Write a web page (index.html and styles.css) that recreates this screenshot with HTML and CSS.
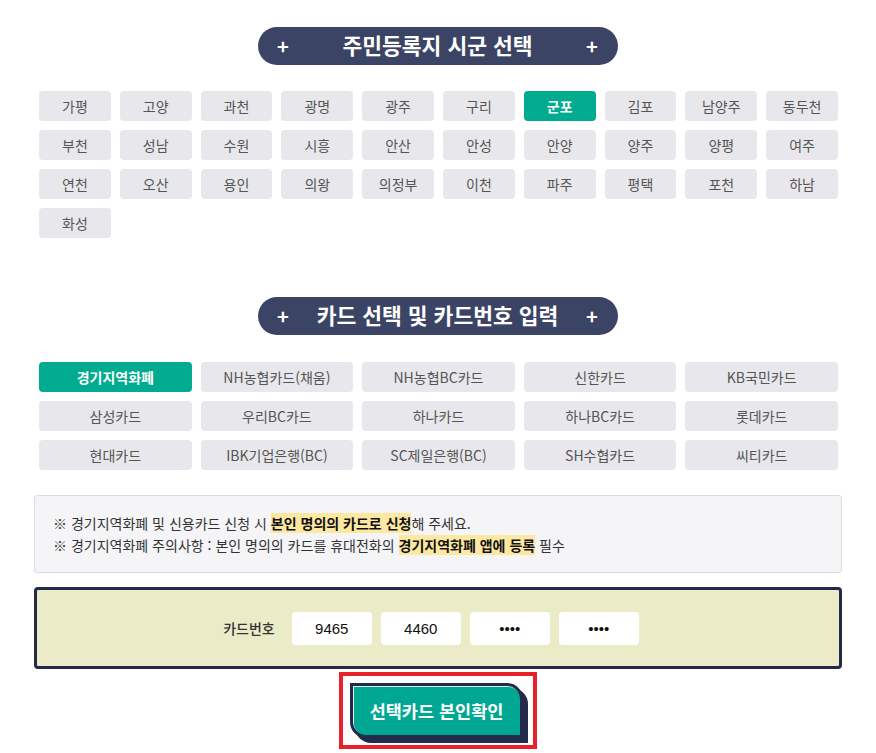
FILE: index.html
```html
<!DOCTYPE html>
<html lang="ko">
  <head>
    <meta charset="UTF-8" />
    <meta name="viewport" content="width=device-width, initial-scale=1.0" />
    <title>카드 본인확인</title>
    <link rel="stylesheet" href="styles.css">
  </head>
  <body>
    <div class="container">
      <div class="section-title">
        <span class="plus">+</span>
        <span class="label">주민등록지 시군 선택</span>
        <span class="plus">+</span>
      </div>

      <div class="city-grid">
        <button class="opt">가평</button>
        <button class="opt">고양</button>
        <button class="opt">과천</button>
        <button class="opt">광명</button>
        <button class="opt">광주</button>
        <button class="opt">구리</button>
        <button class="opt on">군포</button>
        <button class="opt">김포</button>
        <button class="opt">남양주</button>
        <button class="opt">동두천</button>
        <button class="opt">부천</button>
        <button class="opt">성남</button>
        <button class="opt">수원</button>
        <button class="opt">시흥</button>
        <button class="opt">안산</button>
        <button class="opt">안성</button>
        <button class="opt">안양</button>
        <button class="opt">양주</button>
        <button class="opt">양평</button>
        <button class="opt">여주</button>
        <button class="opt">연천</button>
        <button class="opt">오산</button>
        <button class="opt">용인</button>
        <button class="opt">의왕</button>
        <button class="opt">의정부</button>
        <button class="opt">이천</button>
        <button class="opt">파주</button>
        <button class="opt">평택</button>
        <button class="opt">포천</button>
        <button class="opt">하남</button>
        <button class="opt">화성</button>
      </div>

      <div class="section-title second">
        <span class="plus">+</span>
        <span class="label">카드 선택 및 카드번호 입력</span>
        <span class="plus">+</span>
      </div>

      <div class="card-grid">
        <button class="opt on">경기지역화폐</button>
        <button class="opt">NH농협카드(채움)</button>
        <button class="opt">NH농협BC카드</button>
        <button class="opt">신한카드</button>
        <button class="opt">KB국민카드</button>
        <button class="opt">삼성카드</button>
        <button class="opt">우리BC카드</button>
        <button class="opt">하나카드</button>
        <button class="opt">하나BC카드</button>
        <button class="opt">롯데카드</button>
        <button class="opt">현대카드</button>
        <button class="opt">IBK기업은행(BC)</button>
        <button class="opt">SC제일은행(BC)</button>
        <button class="opt">SH수협카드</button>
        <button class="opt">씨티카드</button>
      </div>

      <div class="notice">
        <p>※ 경기지역화폐 및 신용카드 신청 시 <mark>본인 명의의 카드로 신청</mark>해 주세요.</p>
        <p>※ 경기지역화폐 주의사항 : 본인 명의의 카드를 휴대전화의 <mark>경기지역화폐 앱에 등록</mark> 필수</p>
      </div>

      <div class="card-number">
        <span class="cn-label">카드번호</span>
        <input class="cn-input" type="text" value="9465" readonly>
        <input class="cn-input" type="text" value="4460" readonly>
        <input class="cn-input" type="text" value="••••" readonly>
        <input class="cn-input" type="text" value="••••" readonly>
      </div>

      <div class="confirm">
        <div class="highlight">
          <button class="confirm-btn">선택카드 본인확인</button>
        </div>
      </div>
    </div>
  </body>
</html>
```

FILE: styles.css
```css
* {
  margin: 0;
  padding: 0;
  box-sizing: border-box;
}

body {
  background: #fff;
  font-family: "Noto Sans CJK KR", "Noto Sans", sans-serif;
  color: #333;
}

.container {
  width: 800px;
  margin: 0 auto;
  padding-top: 27px;
}

/* section headers */
.section-title {
  width: 360px;
  height: 38px;
  margin: 0 auto;
  background: #3b4465;
  border-radius: 19px;
  display: flex;
  align-items: center;
  justify-content: space-between;
  padding: 0 20px 0 19px;
  color: #fff;
  font-weight: 700;
}

.section-title .plus {
  font-size: 20px;
  width: 12px;
  text-align: center;
  line-height: 1;
}

.section-title .label {
  font-size: 21.5px;
  line-height: 1;
  padding-bottom: 2px;
}

.section-title.second {
  margin-top: 59px;
}

/* option buttons */
.opt {
  height: 30px;
  border: none;
  border-radius: 4px;
  background: #e8e8ec;
  color: #555;
  font-family: inherit;
  font-size: 14px;
  cursor: pointer;
}

.opt.on {
  background: #00ab8f;
  color: #fff;
  font-weight: 700;
}

.city-grid {
  display: grid;
  grid-template-columns: repeat(10, 1fr);
  gap: 9px;
  margin-top: 26px;
  padding-left: 1px;
}

.card-grid {
  display: grid;
  grid-template-columns: repeat(5, 1fr);
  gap: 9px;
  margin-top: 27px;
  padding-left: 1px;
}

/* notice box */
.notice {
  margin: 25px -4px 0 -4px;
  height: 78px;
  padding: 16px 18px;
  background: #f5f5f8;
  border: 1px solid #dcdce0;
  border-radius: 3px;
  font-size: 14px;
  line-height: 22px;
  color: #333;
}

.notice mark {
  background: #fde8a2;
  color: #111;
  font-weight: 700;
}

/* card number */
.card-number {
  margin: 14px -4px 0 -4px;
  height: 82px;
  background: #ebebc8;
  border: 3px solid #232a4a;
  border-radius: 4px;
  display: flex;
  align-items: center;
  justify-content: center;
  gap: 9px;
  padding-right: 14px;
}

.cn-label {
  font-size: 14px;
  font-weight: 500;
  color: #333;
  margin-right: 8px;
}

.cn-input {
  width: 80px;
  height: 33px;
  border: none;
  border-radius: 4px;
  background: #fff;
  text-align: center;
  font-family: "Liberation Sans", Arial, sans-serif;
  font-size: 15px;
  color: #111;
}

/* confirm button */
.confirm {
  display: flex;
  justify-content: center;
  margin-top: 3px;
}

.highlight {
  border: 4px solid #e8202a;
  padding: 7px 5px 2px 7px;
}

.confirm-btn {
  width: 173px;
  height: 55px;
  background: #00a893;
  border: 3px solid #232a4a;
  border-radius: 0 16px 0 16px;
  box-shadow: inset 1px 1px 0 #d8efea, 5px 5px 0 #232a4a;
  color: #fff;
  font-family: inherit;
  font-size: 17.5px;
  font-weight: 700;
  cursor: pointer;
  margin-right: 5px;
  margin-bottom: 5px;
}
```
